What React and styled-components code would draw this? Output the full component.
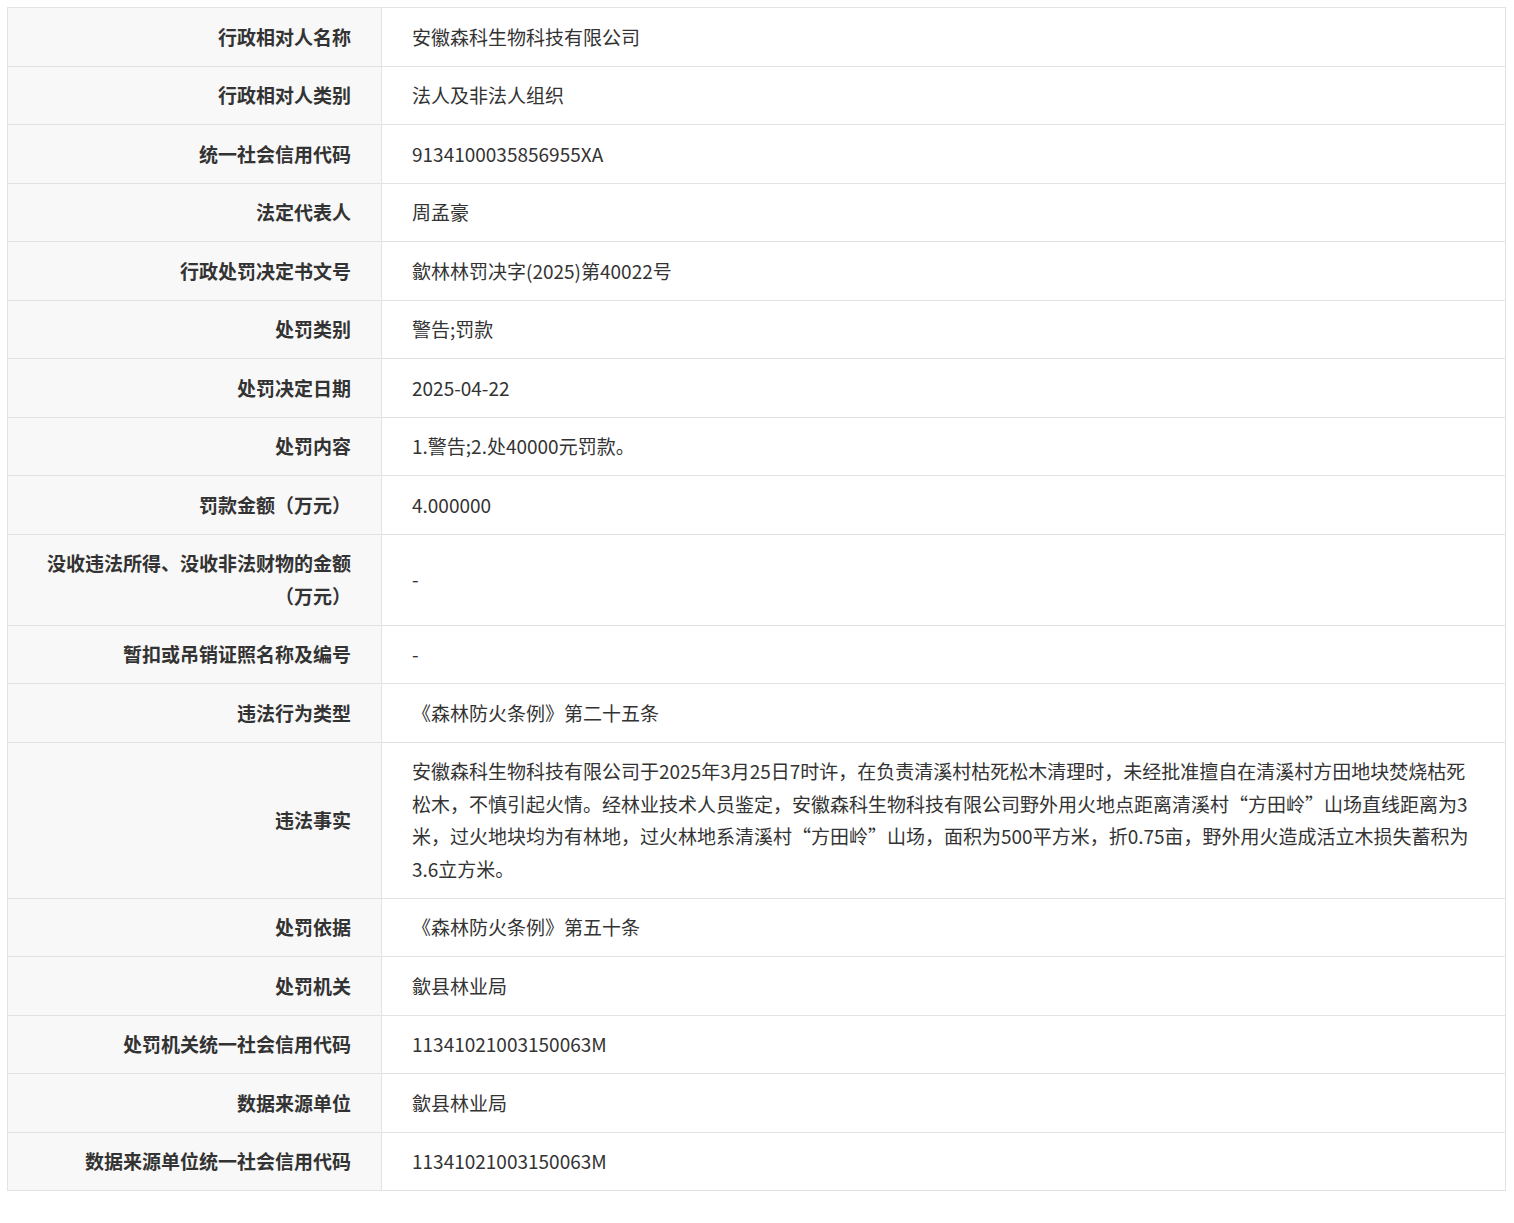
import React from "react";
import styled, { createGlobalStyle } from "styled-components";

const Global = createGlobalStyle`
  body { margin: 0; background: #fff; font-family: "Noto Sans CJK SC", "Noto Sans", sans-serif; color: #333; }
`;

const Wrap = styled.div`
  padding: 7px 8px 0 7px;
  width: 1499px;
`;

const Table = styled.table`
  width: 100%;
  border-collapse: collapse;
  table-layout: fixed;
  font-size: 19px;
  line-height: 32.5px;
`;

const Label = styled.th`
  width: 313px;
  background: #f8f8f8;
  border: 1px solid #e3e3e3;
  padding: 12.5px 30px;
  text-align: right;
  font-weight: 700;
  color: #333;
`;

const Value = styled.td`
  border: 1px solid #e3e3e3;
  padding: 12.5px 30px;
  text-align: left;
  color: #333;
`;

const rows = [
  ["行政相对人名称", "安徽森科生物科技有限公司"],
  ["行政相对人类别", "法人及非法人组织"],
  ["统一社会信用代码", "9134100035856955XA"],
  ["法定代表人", "周孟豪"],
  ["行政处罚决定书文号", "歙林林罚决字(2025)第40022号"],
  ["处罚类别", "警告;罚款"],
  ["处罚决定日期", "2025-04-22"],
  ["处罚内容", "1.警告;2.处40000元罚款。"],
  ["罚款金额（万元）", "4.000000"],
  ["没收违法所得、没收非法财物的金额（万元）", "-"],
  ["暂扣或吊销证照名称及编号", "-"],
  ["违法行为类型", "《森林防火条例》第二十五条"],
  ["违法事实", "安徽森科生物科技有限公司于2025年3月25日7时许，在负责清溪村枯死松木清理时，未经批准擅自在清溪村方田地块焚烧枯死松木，不慎引起火情。经林业技术人员鉴定，安徽森科生物科技有限公司野外用火地点距离清溪村“方田岭”山场直线距离为3米，过火地块均为有林地，过火林地系清溪村“方田岭”山场，面积为500平方米，折0.75亩，野外用火造成活立木损失蓄积为3.6立方米。"],
  ["处罚依据", "《森林防火条例》第五十条"],
  ["处罚机关", "歙县林业局"],
  ["处罚机关统一社会信用代码", "11341021003150063M"],
  ["数据来源单位", "歙县林业局"],
  ["数据来源单位统一社会信用代码", "11341021003150063M"],
];

export default function App() {
  return (
    <Wrap>
      <Global />
      <Table>
        <tbody>
          {rows.map(([l, v]) => (
            <tr key={l}>
              <Label>{l}</Label>
              <Value>{v}</Value>
            </tr>
          ))}
        </tbody>
      </Table>
    </Wrap>
  );
}
